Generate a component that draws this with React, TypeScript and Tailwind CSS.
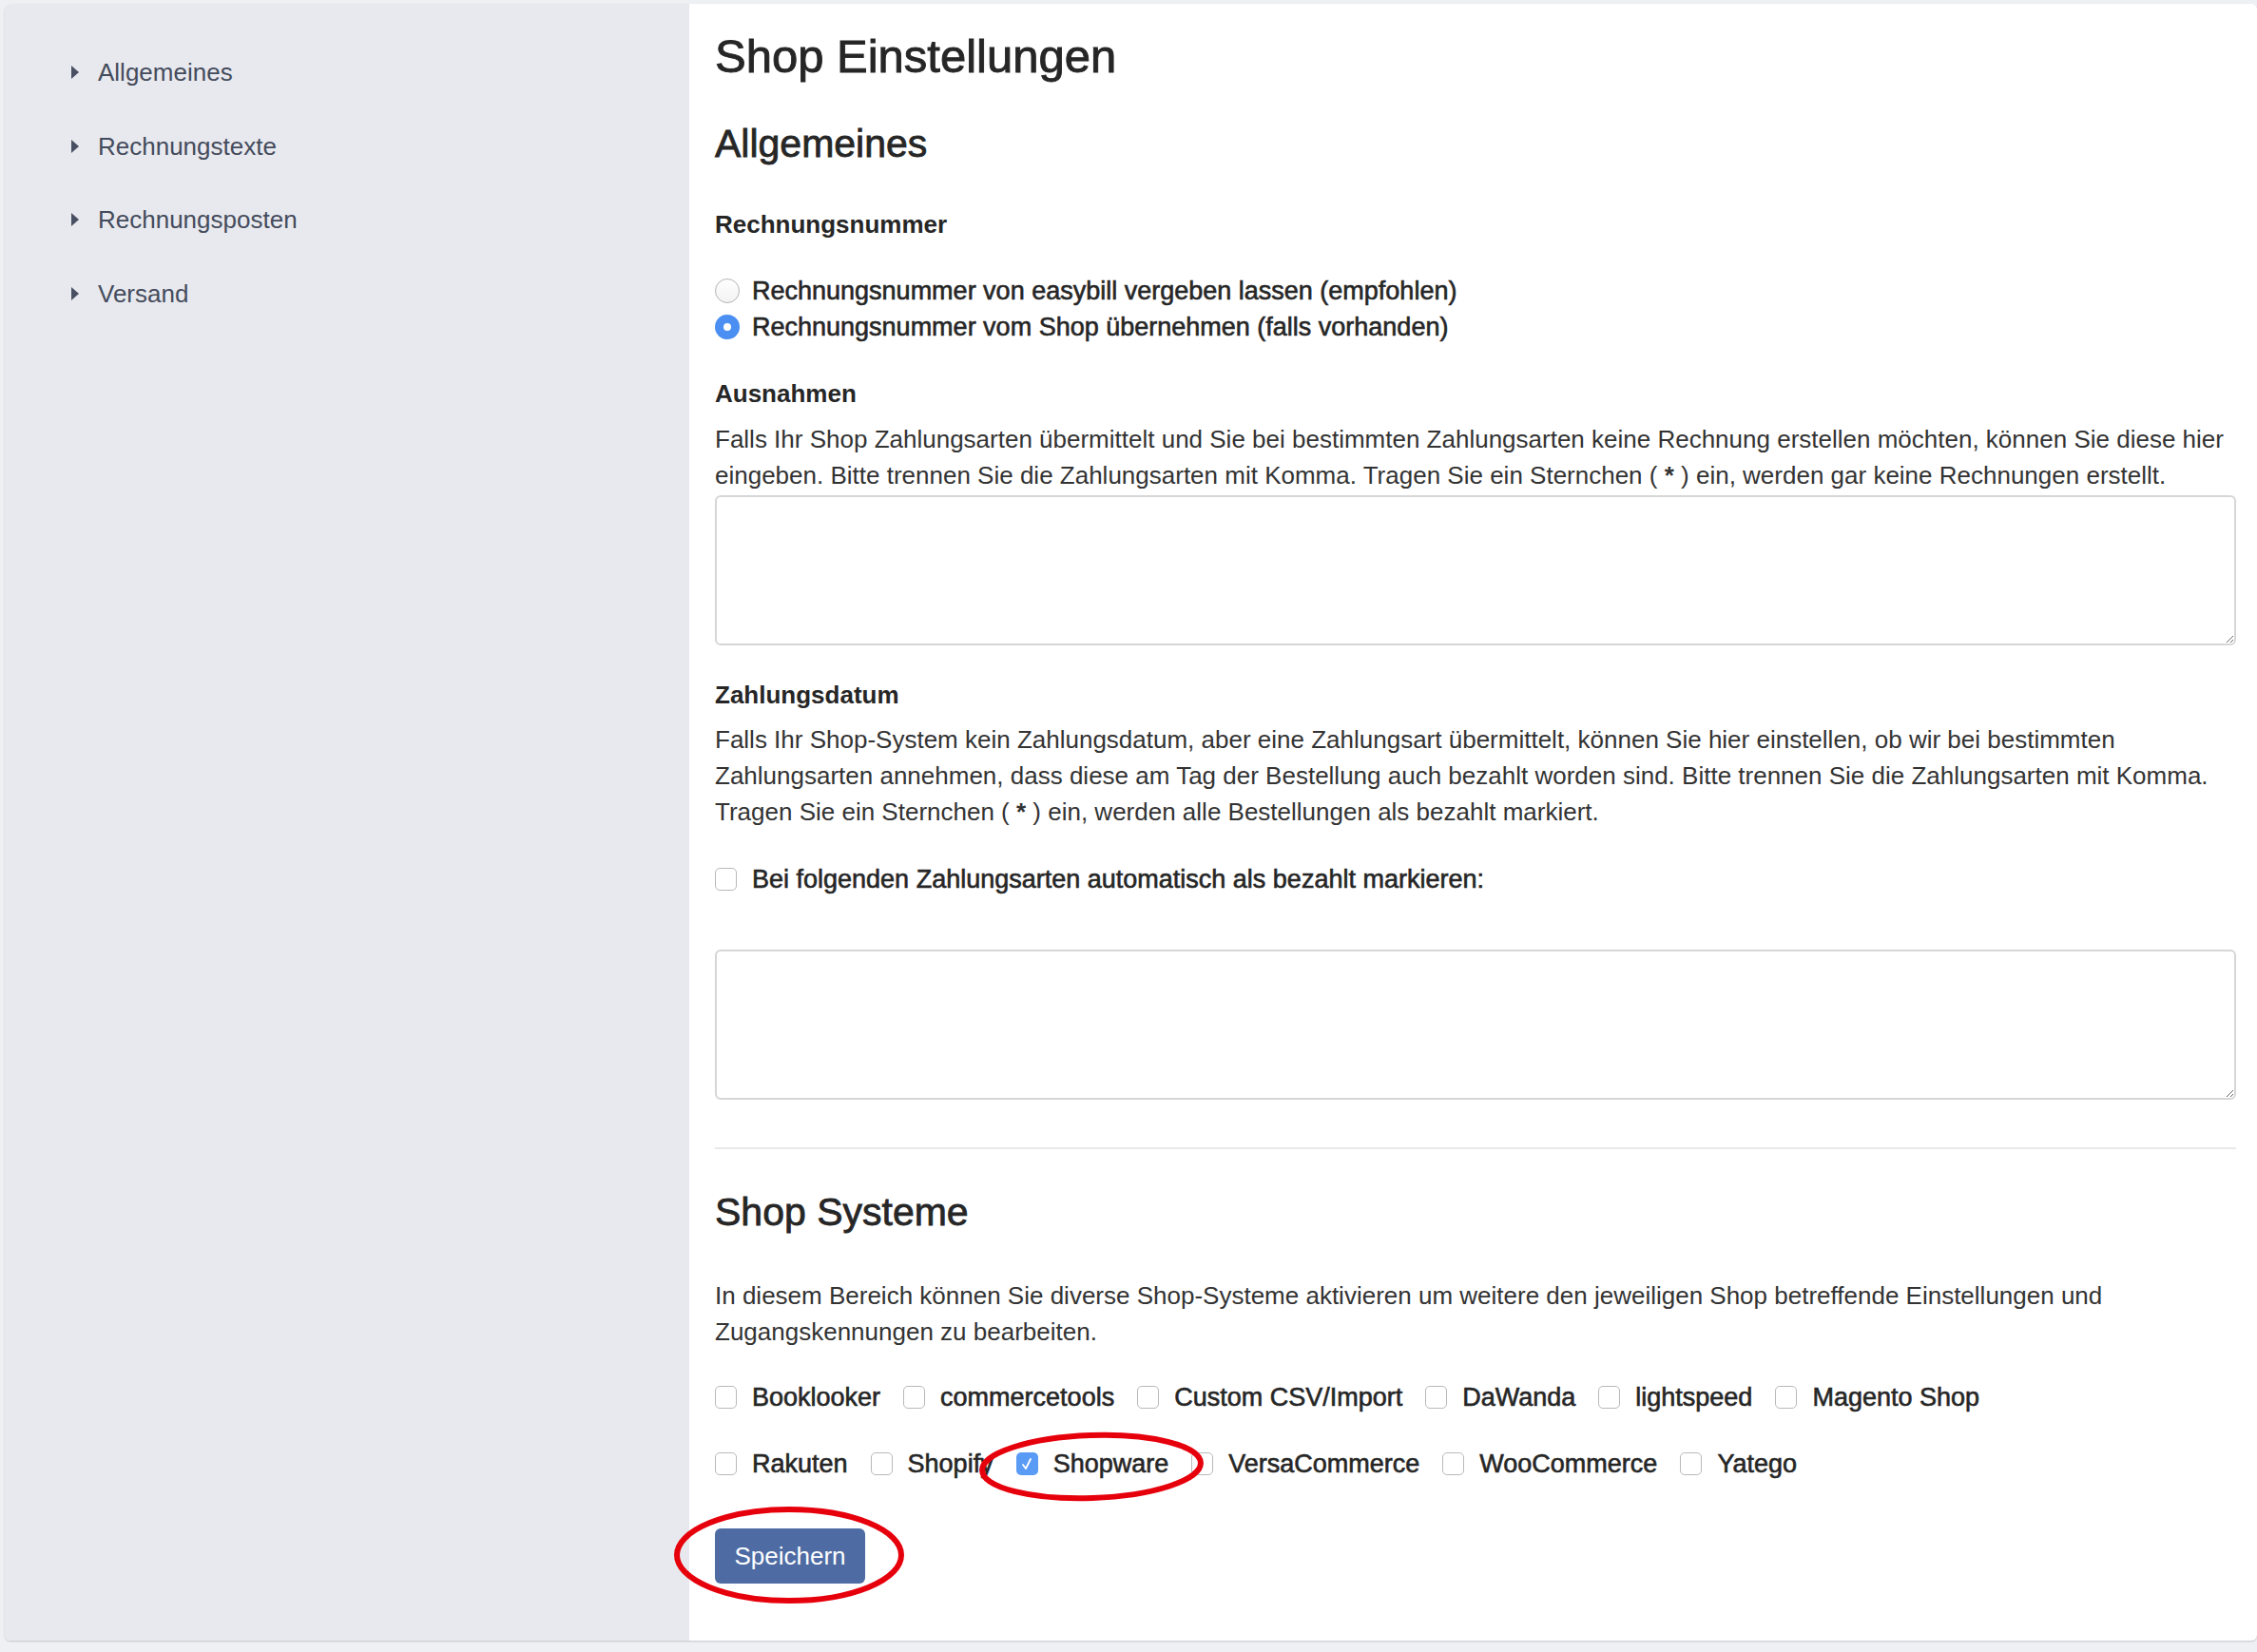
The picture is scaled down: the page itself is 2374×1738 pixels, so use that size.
import React from "react";

const font = { fontFamily: '"Liberation Sans", Arial, sans-serif' };

function Caret() {
  return (
    <svg width="9" height="14" viewBox="0 0 9 14" className="shrink-0">
      <polygon points="0,0 8,7 0,14" fill="#4a5063" />
    </svg>
  );
}

function Radio({ checked }: { checked?: boolean }) {
  if (checked) {
    return (
      <span className="w-[26px] h-[26px] rounded-full bg-[#4a8ff1] flex items-center justify-center shrink-0">
        <span className="w-[8px] h-[8px] rounded-full bg-white" />
      </span>
    );
  }
  return (
    <span className="w-[26px] h-[26px] rounded-full border border-[#b4b4b4] bg-gradient-to-b from-white to-[#f3f3f3] shrink-0" />
  );
}

function Check({ checked }: { checked?: boolean }) {
  if (checked) {
    return (
      <span className="w-[23px] h-[24px] rounded-[5px] bg-[#5a9bf6] flex items-center justify-center shrink-0">
        <svg width="12" height="14" viewBox="0 0 12 14">
          <path d="M2 8 L5 12 L10 2" stroke="white" strokeWidth="1.8" fill="none" strokeLinecap="round" strokeLinejoin="round" />
        </svg>
      </span>
    );
  }
  return (
    <span className="w-[23px] h-[24px] rounded-[5px] border border-[#b9b9b9] bg-white shrink-0" />
  );
}

const shopsRow1 = ["Booklooker", "commercetools", "Custom CSV/Import", "DaWanda", "lightspeed", "Magento Shop"];
const shopsRow2 = ["Rakuten", "Shopify", "Shopware", "VersaCommerce", "WooCommerce", "Yatego"];

export default function App() {
  return (
    <div className="relative w-[2374px] min-h-[1738px] bg-[#eef0f4] pt-[4px] pl-[5px] pb-[12px]" style={font}>
      <div className="flex rounded-[6px] overflow-hidden shadow-[0_1px_2px_rgba(0,0,0,0.18)] bg-white">
        {/* Sidebar */}
        <aside className="w-[720px] shrink-0 bg-[#e8e9ee] pt-[53px] pl-[70px]">
          <ul className="flex flex-col gap-[39.7px]">
            {["Allgemeines", "Rechnungstexte", "Rechnungsposten", "Versand"].map((t) => (
              <li key={t} className="flex items-center h-[38px] text-[26px] leading-[38px] text-[#444b5c]">
                <Caret />
                <span className="ml-[19px]">{t}</span>
              </li>
            ))}
          </ul>
        </aside>

        {/* Main */}
        <main className="flex-1 pl-[27px] pr-[22px] pt-[27px] pb-[60px] text-[#333333]">
          <h1 className="text-[49px] leading-[56px] [-webkit-text-stroke:0.9px] text-[#262626]">Shop Einstellungen</h1>
          <h2 className="mt-[40px] text-[41px] leading-[48px] [-webkit-text-stroke:0.8px] text-[#262626]">Allgemeines</h2>

          <div className="mt-[42px] text-[26px] leading-[38px] font-bold text-[#262626]">Rechnungsnummer</div>

          <div className="mt-[32px] flex flex-col text-[#262626]">
            <label className="flex items-center h-[38px] text-[27px] leading-[38px] [-webkit-text-stroke:0.6px]">
              <Radio />
              <span className="ml-[13px]">Rechnungsnummer von easybill vergeben lassen (empfohlen)</span>
            </label>
            <label className="flex items-center h-[38px] text-[27px] leading-[38px] [-webkit-text-stroke:0.6px]">
              <Radio checked />
              <span className="ml-[13px]">Rechnungsnummer vom Shop übernehmen (falls vorhanden)</span>
            </label>
          </div>

          <div className="mt-[32px] text-[26px] leading-[38px] font-bold text-[#262626]">Ausnahmen</div>
          <p className="mt-[10px] text-[26px] leading-[38px] whitespace-nowrap">
            Falls Ihr Shop Zahlungsarten übermittelt und Sie bei bestimmten Zahlungsarten keine Rechnung erstellen möchten, können Sie diese hier
            <br />
            eingeben. Bitte trennen Sie die Zahlungsarten mit Komma. Tragen Sie ein Sternchen ( <b>*</b> ) ein, werden gar keine Rechnungen erstellt.
          </p>
          <textarea className="block mt-[2px] w-full h-[158px] border-2 border-[#d6d6d6] rounded-[6px] bg-white" />

          <div className="mt-[33px] text-[26px] leading-[38px] font-bold text-[#262626]">Zahlungsdatum</div>
          <p className="mt-[9px] text-[26px] leading-[38px] whitespace-nowrap">
            Falls Ihr Shop-System kein Zahlungsdatum, aber eine Zahlungsart übermittelt, können Sie hier einstellen, ob wir bei bestimmten
            <br />
            Zahlungsarten annehmen, dass diese am Tag der Bestellung auch bezahlt worden sind. Bitte trennen Sie die Zahlungsarten mit Komma.
            <br />
            Tragen Sie ein Sternchen ( <b>*</b> ) ein, werden alle Bestellungen als bezahlt markiert.
          </p>

          <label className="mt-[33px] flex items-center h-[38px] text-[27px] leading-[38px] [-webkit-text-stroke:0.6px] text-[#262626]">
            <Check />
            <span className="ml-[16px]">Bei folgenden Zahlungsarten automatisch als bezahlt markieren:</span>
          </label>

          <textarea className="block mt-[55px] w-full h-[158px] border-2 border-[#d6d6d6] rounded-[6px] bg-white" />

          <hr className="mt-[50px] border-0 h-[2px] bg-[#e9e9e9]" />

          <h2 className="mt-[42px] text-[41px] leading-[48px] [-webkit-text-stroke:0.8px] text-[#262626]">Shop Systeme</h2>
          <p className="mt-[45px] text-[26px] leading-[38px] whitespace-nowrap">
            In diesem Bereich können Sie diverse Shop-Systeme aktivieren um weitere den jeweiligen Shop betreffende Einstellungen und
            <br />
            Zugangskennungen zu bearbeiten.
          </p>

          <div className="mt-[31px] flex flex-col gap-[32px] text-[#262626]">
            {[shopsRow1, shopsRow2].map((row, i) => (
              <div key={i} className="flex items-center h-[38px]">
                {row.map((s, j) => (
                  <label
                    key={s}
                    className={`flex items-center text-[27px] leading-[38px] [-webkit-text-stroke:0.6px] ${j === 0 ? "" : "ml-[24px]"}`}
                  >
                    <Check checked={s === "Shopware"} />
                    <span className="ml-[16px]">{s}</span>
                  </label>
                ))}
              </div>
            ))}
          </div>

          <button className="mt-[49px] w-[158px] h-[58px] rounded-[6px] bg-[#4e6ca3] text-white text-[26px] flex items-center justify-center">
            Speichern
          </button>
        </main>
      </div>

      {/* Red annotation ellipses */}
      <svg className="absolute left-0 top-0 pointer-events-none" width="2374" height="1738">
        <ellipse cx="1148" cy="1543" rx="115" ry="33" fill="none" stroke="#e6000c" strokeWidth="6" transform="rotate(-2 1148 1543)" />
        <ellipse cx="830" cy="1636" rx="118" ry="48" fill="none" stroke="#e6000c" strokeWidth="6" />
      </svg>
    </div>
  );
}
